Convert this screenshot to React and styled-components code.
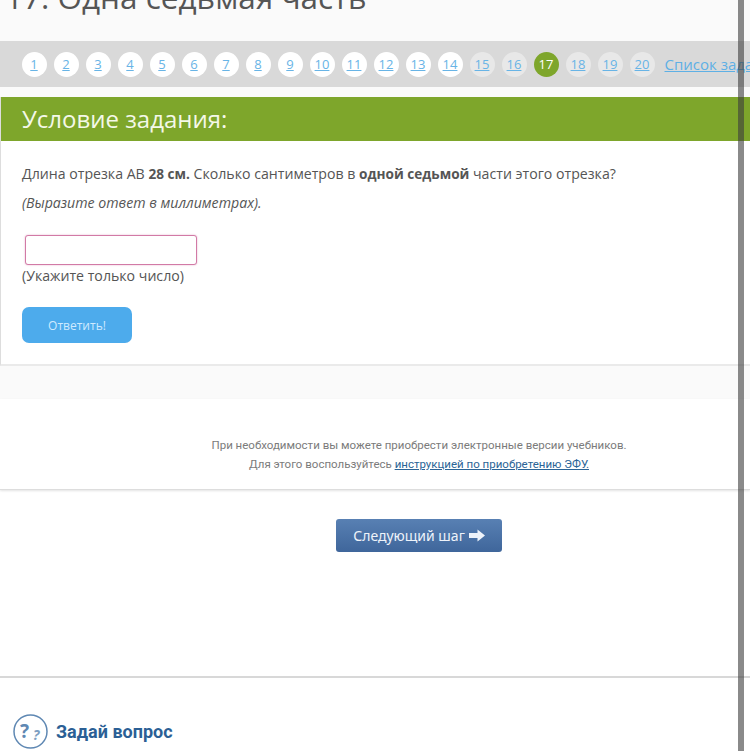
import React from 'react';
import styled, { createGlobalStyle } from 'styled-components';

const GlobalStyle = createGlobalStyle`
  html, body {
    margin: 0;
    padding: 0;
    height: 751px;
    overflow: hidden;
    background: #fff;
  }
  * { box-sizing: border-box; }
`;

const Page = styled.div`
  position: relative;
  width: 750px;
  height: 751px;
  overflow: hidden;
  font-family: "Open Sans", sans-serif;
  color: #555;
`;

const Top = styled.div`
  background: #fafafa;
  height: 399px;
  overflow: hidden;
`;

const Title = styled.h1`
  margin: -23px 0 0 5px;
  height: 64px;
  font-size: 31.5px;
  line-height: 40px;
  font-weight: 400;
  color: #555;
  white-space: nowrap;
`;

const Steps = styled.nav`
  display: flex;
  align-items: center;
  gap: 7px;
  width: 800px;
  height: 46px;
  padding-left: 21.5px;
  background: #d9d9d9;
`;

const Step = styled.a`
  flex: none;
  width: 25px;
  height: 25px;
  border-radius: 50%;
  display: flex;
  align-items: center;
  justify-content: center;
  font-size: 13px;
  text-decoration: ${(p) => (p.$state === 'current' ? 'none' : 'underline')};
  color: ${(p) => (p.$state === 'current' ? '#fff' : '#68b4e6')};
  background: ${(p) =>
    p.$state === 'current' ? '#7ea62b' : p.$state === 'todo' ? '#e8e8e8' : '#fff'};
`;

const TaskList = styled.a`
  flex: none;
  margin-left: 3px;
  font-size: 15px;
  color: #5eb0e5;
  text-decoration: underline;
`;

const Task = styled.section`
  width: 800px;
  margin-top: 10px;
  background: #fff;
  border-left: 1px solid #ddd;
  border-bottom: 2px solid #eaeaea;
`;

const TaskHead = styled.h2`
  margin: 0;
  height: 44px;
  padding-left: 21px;
  background: #7ea62b;
  color: #f4f8e8;
  font-size: 24px;
  font-weight: 400;
  line-height: 44px;
`;

const TaskBody = styled.div`
  height: 223px;
  padding: 22px 0 0 21px;
`;

const Question = styled.p`
  margin: 0;
  font-size: 14.15px;
  line-height: 21px;
  color: #555;

  b {
    font-size: 13.6px;
  }
`;

const Hint = styled(Question)`
  margin-top: 8px;
  font-style: italic;
`;

const AnswerInput = styled.input`
  display: block;
  margin: 22px 0 0 3px;
  width: 172px;
  height: 30px;
  border: 1px solid #d27aa6;
  border-radius: 3px;
  box-shadow: 0 0 2px #e5b0cb;
  background: #fff;
  outline: none;
`;

const Note = styled(Question)`
  line-height: 22px;
`;

const AnswerButton = styled.button`
  display: block;
  margin-top: 20px;
  width: 110px;
  height: 36px;
  border: none;
  border-radius: 7px;
  background: #4dabec;
  color: #cfeaff;
  font-family: inherit;
  font-size: 12px;
`;

const Notice = styled.div`
  height: 91px;
  padding: 37px 0 0 88px;
  text-align: center;
  font-family: "Roboto", sans-serif;
  font-size: 11.5px;
  line-height: 19px;
  color: #7b7b7b;
  border-bottom: 1px solid #ddd;
  box-shadow: 0 1px 2px #e4e4e4;
`;

const NoticeLink = styled.a`
  color: #2b6496;
  text-decoration: underline;
`;

const NextRow = styled.div`
  height: 188px;
  padding: 29px 0 0 336px;
  border-bottom: 2px solid #d8d8d8;
`;

const NextButton = styled.a`
  display: flex;
  align-items: center;
  justify-content: center;
  gap: 4px;
  width: 166px;
  height: 33px;
  border-radius: 3px;
  background: linear-gradient(#5880b3, #3f669b);
  color: #eef3fa;
  font-family: "Noto Sans", sans-serif;
  font-size: 14px;
`;

const AskRow = styled.div`
  display: flex;
  align-items: center;
  gap: 8px;
  padding: 36px 0 0 13px;
`;

const AskTitle = styled.a`
  font-family: "Roboto", sans-serif;
  font-size: 18px;
  font-weight: 700;
  color: #2b5f95;
`;

const ScrollBar = styled.div`
  position: absolute;
  top: 0;
  bottom: 0;
  left: 738px;
  width: 6px;
  background: rgba(60, 60, 60, 0.6);
`;

const ArrowIcon = () => (
  <svg width="16" height="13" viewBox="0 0 16 13">
    <path d="M0 4h8.5V0.5L16 6.5l-7.5 6V9H0z" fill="#eef3fa" />
  </svg>
);

const AskIcon = () => (
  <svg width="35" height="35" viewBox="0 0 35 35">
    <circle cx="17.5" cy="17.5" r="16.5" fill="#fff" stroke="#5f88b3" strokeWidth="1.5" />
    <text x="7" y="24" fontFamily="Noto Sans, sans-serif" fontWeight="700" fontSize="19" fill="#5f88b3">?</text>
    <text x="20" y="26" fontFamily="Noto Sans, sans-serif" fontWeight="700" fontStyle="italic" fontSize="14" fill="#7d9fc2">?</text>
  </svg>
);

const stepState = (n) => {
  if (n === 17) return 'current';
  return n > 14 ? 'todo' : 'done';
};

const numbers = Array.from({ length: 20 }, (_, i) => i + 1);

export default function App() {
  return (
    <Page>
      <GlobalStyle />
      <Top>
        <Title>17. Одна седьмая часть</Title>
        <Steps>
          {numbers.map((n) => (
            <Step key={n} $state={stepState(n)}>{n}</Step>
          ))}
          <TaskList>Список заданий</TaskList>
        </Steps>
        <Task>
          <TaskHead>Условие задания:</TaskHead>
          <TaskBody>
            <Question>
              Длина отрезка АВ <b>28 см.</b> Сколько сантиметров в <b>одной седьмой</b> части этого отрезка?
            </Question>
            <Hint>(Выразите ответ в миллиметрах).</Hint>
            <AnswerInput />
            <Note>(Укажите только число)</Note>
            <AnswerButton>Ответить!</AnswerButton>
          </TaskBody>
        </Task>
      </Top>
      <Notice>
        При необходимости вы можете приобрести электронные версии учебников.
        <br />
        Для этого воспользуйтесь <NoticeLink>инструкцией по приобретению ЭФУ.</NoticeLink>
      </Notice>
      <NextRow>
        <NextButton>
          Следующий шаг <ArrowIcon />
        </NextButton>
      </NextRow>
      <AskRow>
        <AskIcon />
        <AskTitle>Задай вопрос</AskTitle>
      </AskRow>
      <ScrollBar />
    </Page>
  );
}
